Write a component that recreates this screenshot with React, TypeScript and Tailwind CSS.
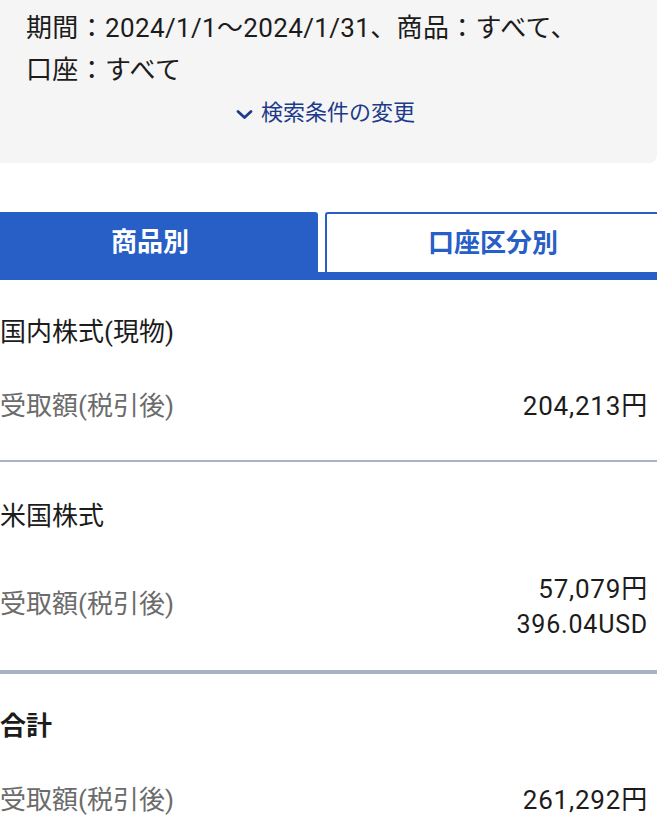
const font = "font-['Roboto','Noto_Sans_CJK_JP',sans-serif]";

type Amount = { main: string; sub?: string };

const SECTIONS: { title: string; bold?: boolean; amount: Amount }[] = [
  { title: "国内株式(現物)", amount: { main: "204,213円" } },
  { title: "米国株式", amount: { main: "57,079円", sub: "396.04USD" } },
  { title: "合計", bold: true, amount: { main: "261,292円" } },
];

function ChevronDown() {
  return (
    <svg width="17" height="11" viewBox="0 0 17 11" aria-hidden className="mt-[2px]">
      <path d="M2 2.5l6.5 6 6.5-6" fill="none" stroke="#1e3a8a" strokeWidth="2.8" strokeLinecap="round" strokeLinejoin="round" />
    </svg>
  );
}

function Section({ title, bold, amount }: { title: string; bold?: boolean; amount: Amount }) {
  return (
    <div className={amount.sub ? "pt-[36px] pb-[28px]" : "pt-[34px] pb-[36px]"}>
      <div className={`text-[26px] leading-[36px] text-[#1c1c1c] ${bold ? "font-bold" : ""}`}>{title}</div>
      <div className="mt-[38px] flex items-center justify-between pr-[9px]">
        <span className={`text-[26px] leading-[36px] text-[#6b6b6b] ${amount.sub ? "-mt-[6px]" : ""}`}>受取額(税引後)</span>
        <div className="flex flex-col items-end tracking-[0.8px] text-[#1c1c1c]">
          <span className={`text-[26px] ${amount.sub ? "leading-[35px]" : "leading-[36px]"}`}>{amount.main}</span>
          {amount.sub && <span className="text-[25px] leading-[35px]">{amount.sub}</span>}
        </div>
      </div>
    </div>
  );
}

export default function App() {
  return (
    <div className={`min-h-[822px] w-[657px] overflow-hidden bg-white ${font}`}>
      <div className="rounded-br-lg bg-[#f5f5f5] pb-[34px] pl-[26px] pt-[7px]">
        <p className="text-[26px] leading-[42px] tracking-[0.35px] text-[#1c1c1c]">
          期間：2024/1/1〜2024/1/31、商品：すべて、
          <br />
          口座：すべて
        </p>
        <div className="mt-[6px] flex items-center justify-center gap-[8px] pr-[32px] text-[22px] leading-[32px] text-[#1e3a8a]">
          <ChevronDown />
          <span>検索条件の変更</span>
        </div>
      </div>

      <div className="mt-[49px]">
        <div className="flex h-[60px] items-stretch gap-[7px]">
          <div className="flex w-[318px] items-center justify-center rounded-tr-[3px] bg-[#285fc6] pr-[18px] text-[26px] font-bold text-white">
            商品別
          </div>
          <div className="flex flex-1 items-center justify-center rounded-tl-[3px] border-l-2 border-t-2 border-[#285fc6] bg-white pl-[2px] text-[26px] font-bold text-[#285fc6]">
            口座区分別
          </div>
        </div>
        <div className="h-[8px] bg-[#285fc6]" />
      </div>

      <Section {...SECTIONS[0]} />
      <div className="h-[2px] bg-[#a9b2c4]" />
      <Section {...SECTIONS[1]} />
      <div className="h-[4px] bg-[#a9b2c4]" />
      <Section {...SECTIONS[2]} />
    </div>
  );
}
